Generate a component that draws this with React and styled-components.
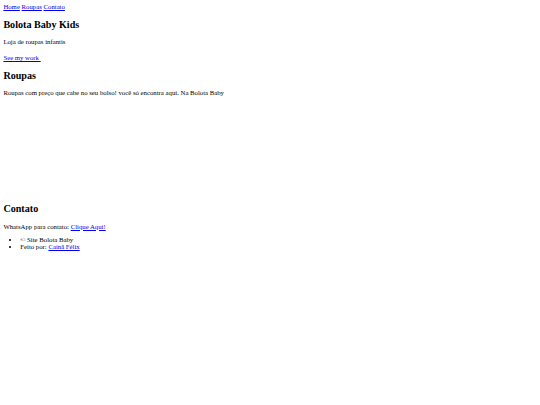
import styled, { createGlobalStyle } from 'styled-components';

// page is shown at 0.421875 of its natural size (1280 -> 540)
const GlobalStyle = createGlobalStyle`
  body {
    margin: 3.375px;
    font-family: 'Liberation Serif', 'Times New Roman', serif;
    font-size: 6.75px;
    color: #000;
    background: #fff;
  }
`;

const Nav = styled.nav`
  display: block;
`;

const A = styled.a`
  color: #0000ee;
  text-decoration: underline;
`;

const Section = styled.section`
  display: block;
`;

const Title = styled.h2`
  font-size: 10.125px;
  font-weight: bold;
  margin: 8.4px 0;
`;

const Text = styled.p`
  margin: 6.75px 0;
`;

const IconSlot = styled.span`
  display: inline-block;
  width: 0;
  height: 8.4px;
`;

const Gallery = styled.div`
  height: 92px;
`;

const Footer = styled.ul`
  margin: 6.75px 0;
  padding-left: 16.9px;
  list-style: disc;
`;

export default function App() {
  return (
    <>
      <GlobalStyle />
      <Nav>
        <A href="#home">Home</A> <A href="#roupas">Roupas</A>{' '}
        <A href="#contato">Contato</A>
      </Nav>
      <Section id="home">
        <Title>Bolota Baby Kids</Title>
        <Text>Loja de roupas infantis</Text>
        <Text>
          <A href="#roupas">
            See my work <IconSlot />
          </A>
        </Text>
      </Section>
      <Section id="roupas">
        <Title>Roupas</Title>
        <Text>
          Roupas com preço que cabe no seu bolso! você só encontra aqui. Na
          Bolota Baby
        </Text>
        <Gallery />
      </Section>
      <Section id="contato">
        <Title>Contato</Title>
        <Text>
          WhatsApp para contato: <A href="#contato">Clique Aqui!</A>
        </Text>
        <Footer>
          <li>© Site Bolota Baby</li>
          <li>
            Feito por: <A href="#contato">Cainã Félix</A>
          </li>
        </Footer>
      </Section>
    </>
  );
}
